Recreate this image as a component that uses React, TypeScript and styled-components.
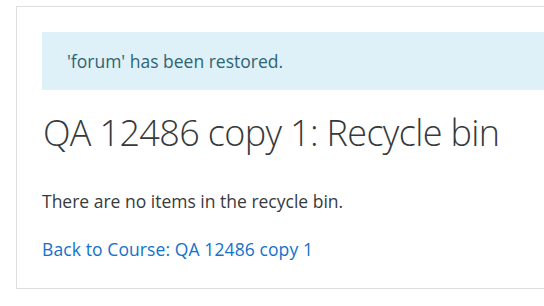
import React from "react";
import styled, { createGlobalStyle } from "styled-components";

const Global = createGlobalStyle`
  html, body { margin: 0; padding: 0; background: #fff; overflow: hidden; }
  body { font-family: "Open Sans", "Noto Sans", sans-serif; color: #373a3c; }
`;

const Page = styled.div`
  padding: 6px 0 0 16px;
  width: 620px;
`;

const Card = styled.section`
  border: 1px solid #dedede;
  padding: 25px 25px 26px 25px;
`;

const Alert = styled.div`
  background: #def1f8;
  color: #2f6473;
  font-size: 17.5px;
  line-height: 26px;
  padding: 16px 25px;
`;

const Heading = styled.h2`
  margin: 21px 0 0 1px;
  font-weight: 300;
  font-size: 36px;
  letter-spacing: -0.65px;
  line-height: 43px;
  color: #373a3c;
`;

const Text = styled.p`
  margin: 34px 0 0 0;
  font-size: 17.5px;
  line-height: 26px;
`;

const LinkRow = styled.p`
  margin: 22px 0 0 0;
  font-size: 17.5px;
  line-height: 26px;
`;

const Link = styled.a`
  color: #1272cc;
  text-decoration: none;
  letter-spacing: 0.1px;
`;

export default function App() {
  return (
    <>
      <Global />
      <Page>
        <Card>
          <Alert>'forum' has been restored.</Alert>
          <Heading>QA 12486 copy 1: Recycle bin</Heading>
          <Text>There are no items in the recycle bin.</Text>
          <LinkRow>
            <Link href="#">Back to Course: QA 12486 copy 1</Link>
          </LinkRow>
        </Card>
      </Page>
    </>
  );
}
